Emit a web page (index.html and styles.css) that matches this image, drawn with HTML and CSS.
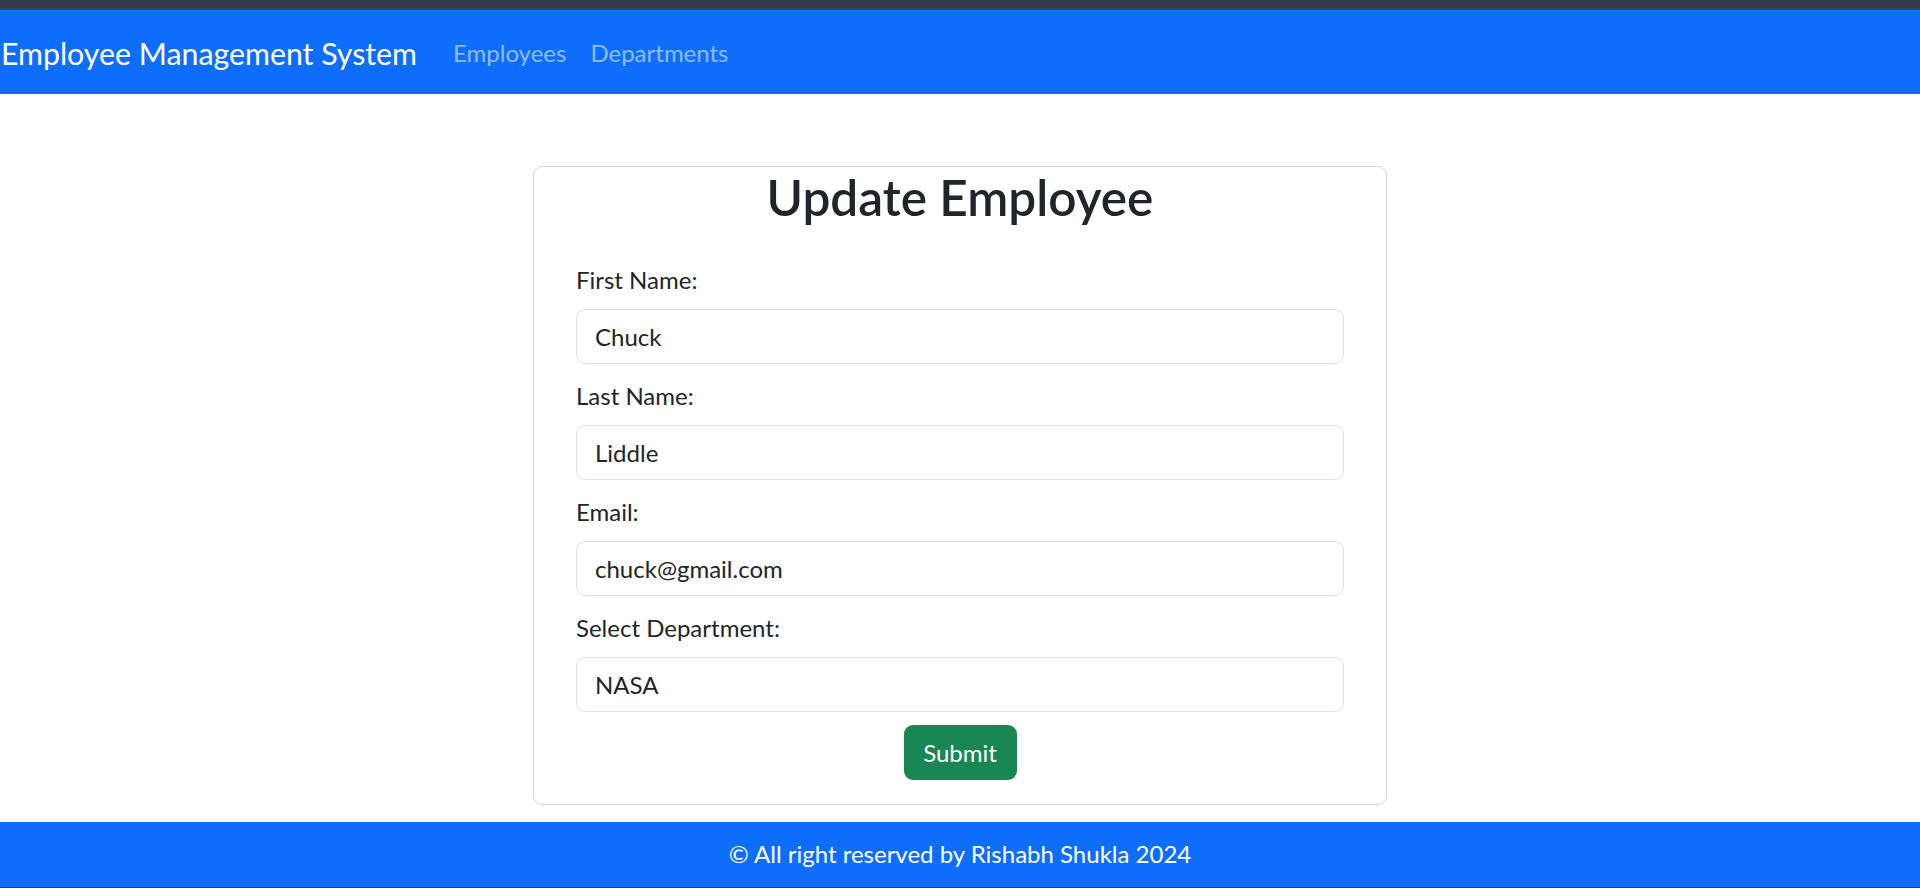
FILE: index.html
```html
<!DOCTYPE html>
<html lang="en">
<head>
<meta charset="utf-8">
<title>Update Employee</title>
<link rel="stylesheet" href="styles.css">
</head>
<body>
<div class="topstrip"></div>
<nav class="navbar">
  <a class="brand" href="#">Employee Management System</a>
  <a class="nav-link" href="#">Employees</a>
  <a class="nav-link" href="#">Departments</a>
</nav>
<main class="main">
  <section class="card">
    <h2 class="card-title">Update Employee</h2>
    <form class="form">
      <div class="group">
        <label class="label" for="fn">First Name:</label>
        <input class="field" id="fn" type="text" value="Chuck">
      </div>
      <div class="group">
        <label class="label" for="ln">Last Name:</label>
        <input class="field" id="ln" type="text" value="Liddle">
      </div>
      <div class="group">
        <label class="label" for="em">Email:</label>
        <input class="field" id="em" type="email" value="chuck@gmail.com">
      </div>
      <div class="group last">
        <label class="label" for="dp">Select Department:</label>
        <select class="field select" id="dp">
          <option>NASA</option>
        </select>
      </div>
      <div class="actions">
        <button class="btn-submit" type="button">Submit</button>
      </div>
    </form>
  </section>
</main>
<footer class="footer">© All right reserved by Rishabh Shukla 2024</footer>
<div class="bottomline"></div>
</body>
</html>
```
FILE: styles.css
```css
* {
  box-sizing: border-box;
}

html, body {
  margin: 0;
  padding: 0;
}

body {
  font-family: Lato, "Open Sans", "Liberation Sans", sans-serif;
  font-size: 24px;
  color: #212529;
  background: #ffffff;
  height: 888px;
  overflow: hidden;
}

.topstrip {
  height: 10px;
  background: #333a4b;
  border-bottom: 2px solid #3d4149;
}

.navbar {
  height: 84px;
  background: #0d6efd;
  display: flex;
  align-items: center;
  padding: 2px 0 0 0;
}

.brand {
  color: #ffffff;
  text-decoration: none;
  font-size: 30.3px;
  line-height: 45px;
  margin-right: 24px;
  padding-left: 1px;
}

.nav-link {
  color: rgba(255, 255, 255, 0.55);
  text-decoration: none;
  font-size: 24px;
  line-height: 36px;
  padding: 0 12px;
}

.main {
  padding-top: 72px;
}

.card {
  width: 854px;
  height: 639px;
  margin: 0 auto;
  border: 1px solid #d4d4d4;
  border-radius: 9px;
  padding: 0 42px 24px;
}

.card-title {
  margin: 0;
  text-align: center;
  font-size: 49.5px;
  line-height: 60px;
  font-weight: 600;
  color: #212529;
}

.form {
  padding-top: 35px;
}

.group {
  display: flex;
  flex-direction: column;
  margin-bottom: 14px;
}

.group.last {
  margin-bottom: 13px;
}

.label {
  line-height: 36px;
  margin-bottom: 11px;
  font-size: 24px;
}

.field {
  height: 55px;
  width: 100%;
  border: 1px solid #dee2e6;
  border-radius: 9px;
  padding: 0 18px;
  font-family: inherit;
  font-size: 24px;
  color: #212529;
  background: #ffffff;
  outline: none;
}

.select {
  appearance: none;
  -webkit-appearance: none;
}

.actions {
  display: flex;
  justify-content: center;
}

.btn-submit {
  height: 55px;
  width: 113px;
  border: none;
  border-radius: 9px;
  background: #198754;
  color: #ffffff;
  font-family: inherit;
  font-size: 24px;
  padding: 0;
}

.footer {
  margin-top: 17px;
  height: 65px;
  background: #0d6efd;
  color: #ffffff;
  display: flex;
  align-items: center;
  justify-content: center;
  font-size: 24px;
  padding-bottom: 2px;
}

.bottomline {
  height: 1px;
  background: #343a40;
}
```
